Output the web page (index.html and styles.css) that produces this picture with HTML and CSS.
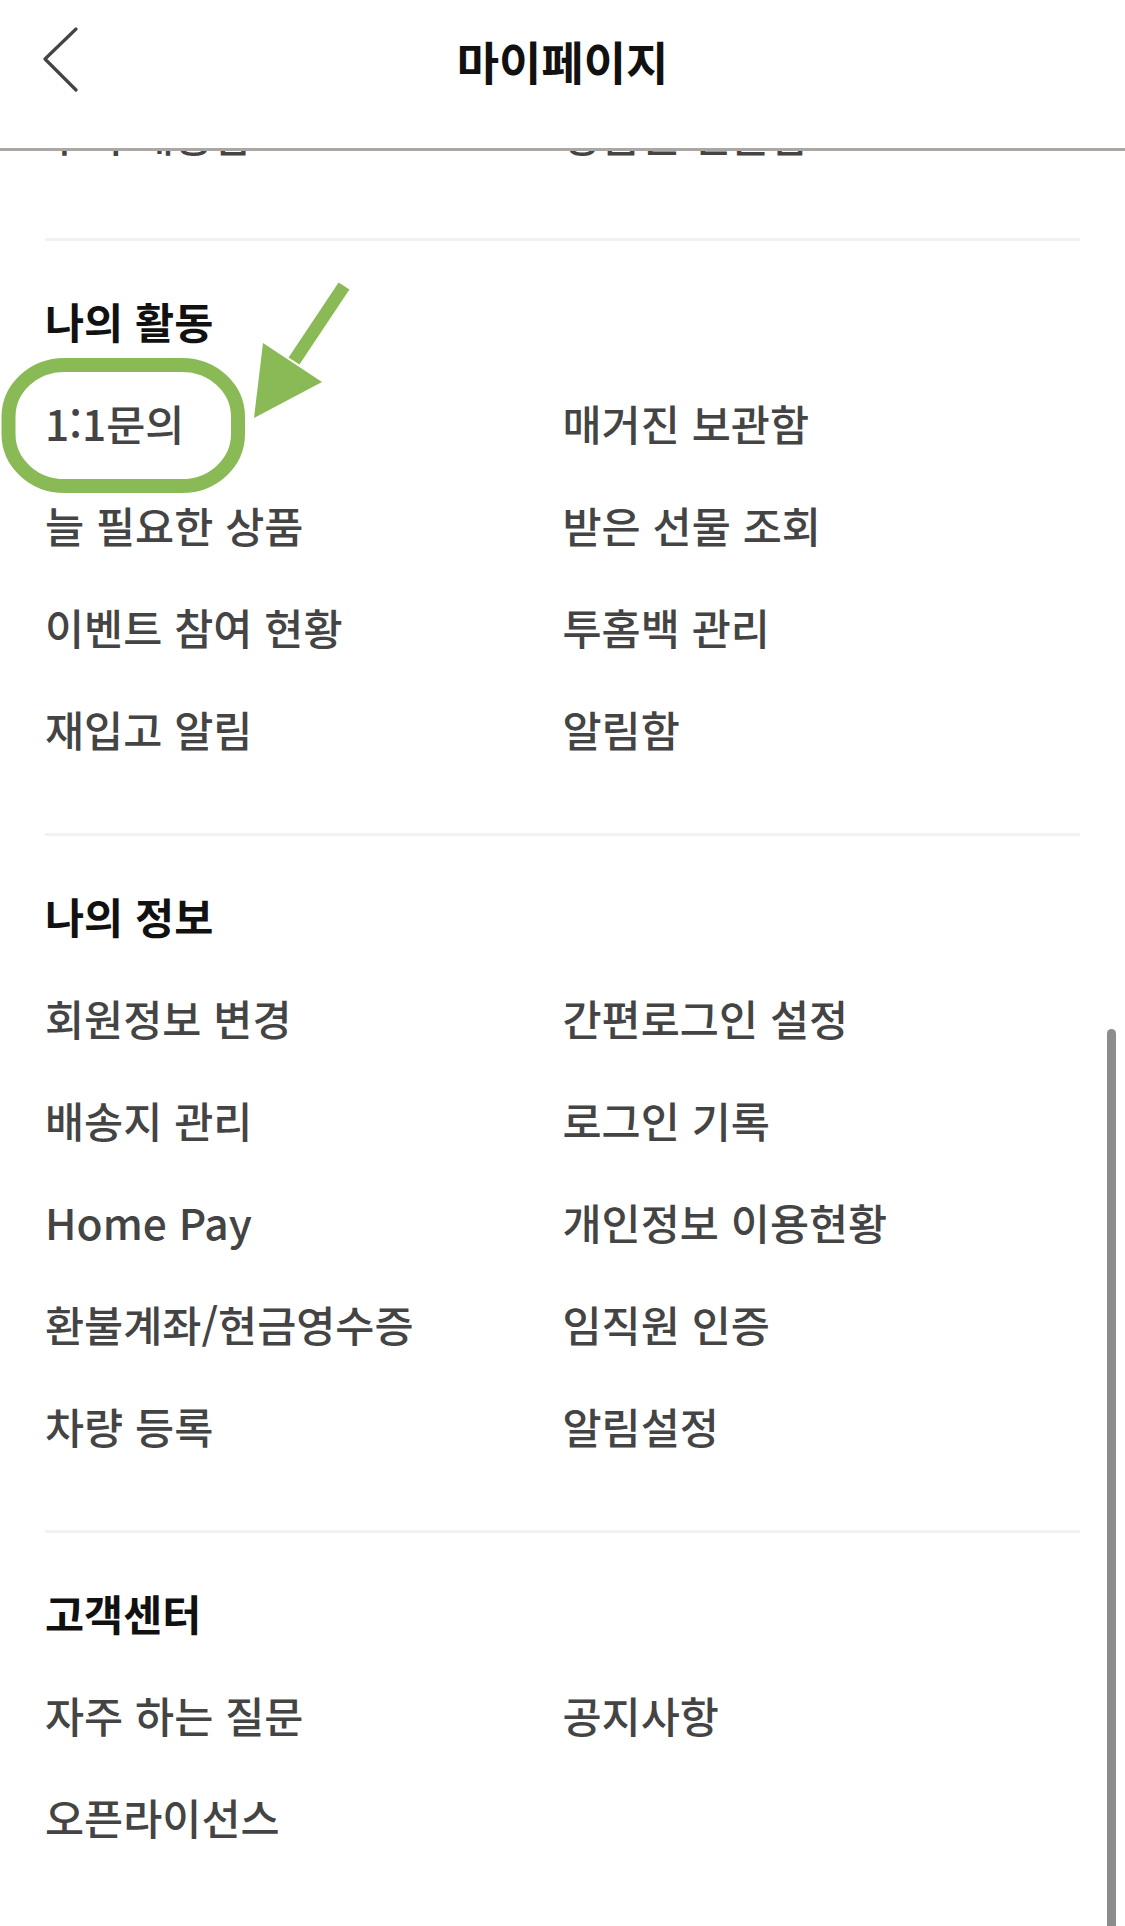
FILE: index.html
```html
<!DOCTYPE html>
<html lang="ko">
<head>
<meta charset="utf-8">
<title>마이페이지</title>
<link rel="stylesheet" href="styles.css">
</head>
<body>
<div class="screen">
  <header class="topbar">
    <div class="topbar-row">
      <button class="back" type="button" aria-label="뒤로">
        <svg width="40" height="70" viewBox="0 0 40 70" aria-hidden="true">
          <polyline points="33,4 2,34 33,65" fill="none" stroke="#444" stroke-width="3.2" stroke-linecap="round" stroke-linejoin="round"/>
        </svg>
      </button>
      <h1 class="title">마이페이지</h1>
      <span class="spacer"></span>
    </div>
  </header>

  <div class="viewport">
    <div class="scroll">
      <section class="group group-prev">
        <ul class="items">
          <li>주기 배송함</li>
          <li>상품권 선물함</li>
        </ul>
      </section>

      <section class="group">
        <h2 class="group-title">나의 활동</h2>
        <ul class="items">
          <li>1:1문의</li>
          <li>매거진 보관함</li>
          <li>늘 필요한 상품</li>
          <li>받은 선물 조회</li>
          <li>이벤트 참여 현황</li>
          <li>투홈백 관리</li>
          <li>재입고 알림</li>
          <li>알림함</li>
        </ul>
      </section>

      <section class="group">
        <h2 class="group-title">나의 정보</h2>
        <ul class="items">
          <li>회원정보 변경</li>
          <li>간편로그인 설정</li>
          <li>배송지 관리</li>
          <li>로그인 기록</li>
          <li>Home Pay</li>
          <li>개인정보 이용현황</li>
          <li>환불계좌/현금영수증</li>
          <li>임직원 인증</li>
          <li>차량 등록</li>
          <li>알림설정</li>
        </ul>
      </section>

      <section class="group">
        <h2 class="group-title">고객센터</h2>
        <ul class="items">
          <li>자주 하는 질문</li>
          <li>공지사항</li>
          <li>오픈라이선스</li>
        </ul>
      </section>
    </div>
    <div class="scrollbar"></div>
  </div>

  <svg class="annotation" width="1125" height="1926" viewBox="0 0 1125 1926" aria-hidden="true">
    <rect x="8.5" y="365" width="229.5" height="121" rx="56" ry="52" fill="none" stroke="#8aba56" stroke-width="14"/>
    <line x1="344" y1="286" x2="294" y2="361" stroke="#8aba56" stroke-width="13"/>
    <polygon points="254,418 263,343 322,382" fill="#8aba56"/>
  </svg>
</div>
</body>
</html>
```

FILE: styles.css
```css
* {
  box-sizing: border-box;
}

html, body {
  margin: 0;
  padding: 0;
  background: #ffffff;
}

body {
  font-family: "Noto Sans CJK KR", "Noto Sans", sans-serif;
  color: #444444;
}

.screen {
  position: relative;
  width: 1125px;
  height: 1926px;
  overflow: hidden;
  background: #ffffff;
}

/* header */
.topbar {
  height: 151px;
  padding-bottom: 28px;
  border-bottom: 3px solid #aca7a2;
  background: #ffffff;
}

.topbar-row {
  height: 120px;
  display: grid;
  grid-template-columns: 1fr auto 1fr;
  align-items: center;
}

.back {
  justify-self: start;
  margin-left: 43px;
  padding: 0;
  border: 0;
  background: none;
  width: 40px;
  height: 70px;
  display: flex;
}

.title {
  margin: 0;
  font-size: 46px;
  font-weight: 700;
  line-height: 120px;
  color: #111111;
}

/* scrolling content */
.viewport {
  position: relative;
  height: 1775px;
  overflow: hidden;
}

.scroll {
  margin-top: -67px;
  padding: 0 45px;
}

.group {
  padding: 30px 0 52px;
  border-top: 3px solid #f2f2f2;
}

.group-prev {
  padding-top: 0;
  border-top: 0;
}

.group-title {
  margin: 0;
  height: 102px;
  line-height: 100px;
  font-size: 42.5px;
  font-weight: 700;
  color: #111111;
}

.items {
  list-style: none;
  margin: 0;
  padding: 0;
  display: grid;
  grid-template-columns: 1fr 1fr;
}

.items li {
  height: 102px;
  line-height: 100px;
  font-size: 42.5px;
  font-weight: 500;
  color: #444444;
  white-space: nowrap;
}

.scrollbar {
  position: absolute;
  right: 9px;
  top: 878px;
  bottom: 0;
  width: 9px;
  border-radius: 5px 5px 0 0;
  background: #8c8c8c;
}

.annotation {
  position: absolute;
  left: 0;
  top: 0;
  pointer-events: none;
}
```
